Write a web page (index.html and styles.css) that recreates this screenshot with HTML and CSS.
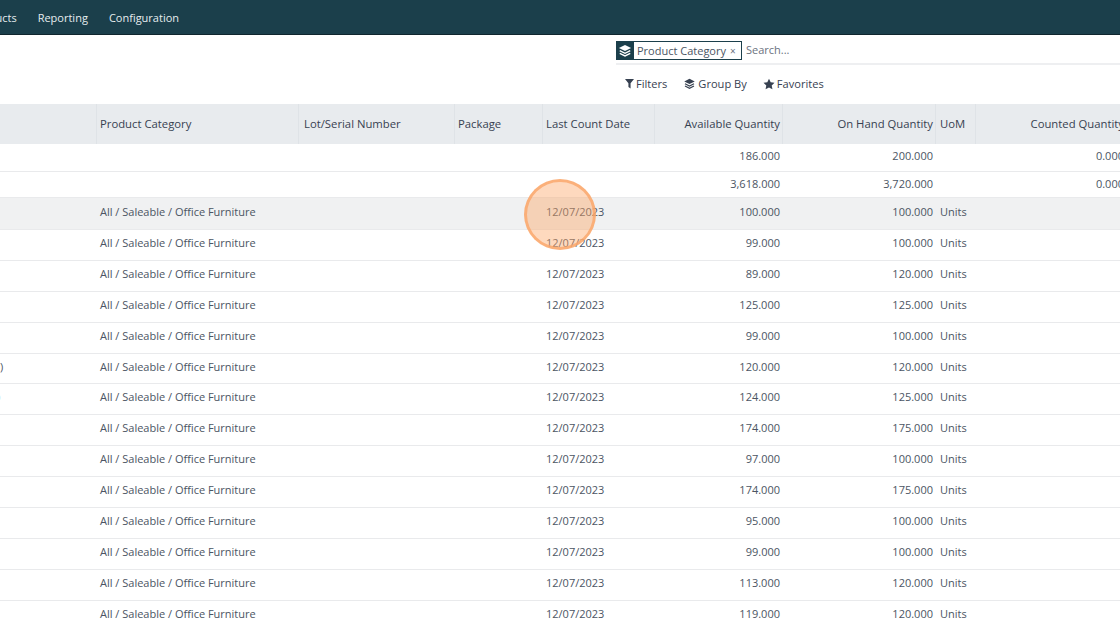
FILE: index.html
```html
<!DOCTYPE html>
<html lang="en">
<head>
<meta charset="utf-8">
<title>Inventory Report</title>
<link rel="stylesheet" href="styles.css">
</head>
<body>
<nav class="navbar">
  <a class="nav-item nav-first">Products</a>
  <a class="nav-item">Reporting</a>
  <a class="nav-item">Configuration</a>
</nav>
<section class="panel">
  <div class="search">
    <div class="facet">
      <span class="facet-icon"><svg viewBox="0 0 16 16" width="14" height="14"><path fill="#fff" d="M8 1 15 4.5 8 8 1 4.5Z"/><path fill="none" stroke="#fff" stroke-width="1.6" d="M2 7.6 8 10.6 14 7.6M2 10.6 8 13.6 14 10.6"/></svg></span>
      <span class="facet-label">Product Category</span>
      <span class="facet-x">×</span>
    </div>
    <span class="placeholder">Search...</span>
  </div>
  <div class="filters">
    <span class="filter"><svg class="ico-filter" viewBox="0 0 10 12" width="9" height="11"><path fill="#374151" d="M0 1H10L6.2 5.6V11.5L3.8 9.800V5.6Z"/></svg>Filters</span>
    <span class="filter"><svg viewBox="0 0 16 16" width="13" height="12"><path fill="#374151" d="M8 1 15 4.5 8 8 1 4.5Z"/><path fill="none" stroke="#374151" stroke-width="1.7" d="M2 7.6 8 10.6 14 7.6M2 10.6 8 13.6 14 10.6"/></svg>Group By</span>
    <span class="filter"><svg viewBox="0 0 24 24" width="12" height="12"><path fill="#374151" d="M12 1.5 15.4 8.6 23 9.6 17.4 15 18.9 22.7 12 18.9 5.100 22.700 6.600 15 1 9.600 8.600 8.600Z"/></svg>Favorites</span>
  </div>
</section>
<main class="list">
  <div class="row head">
    <div class="c"></div><div class="c">Product Category</div><div class="c lot">Lot/Serial Number</div><div class="c">Package</div><div class="c">Last Count Date</div><div class="c r">Available Quantity</div><div class="c r">On Hand Quantity</div><div class="c uom">UoM</div><div class="c r counted">Counted Quantity</div>
  </div>
  <div class="row group g1"><div></div><div></div><div></div><div></div><div></div><div class="r">186.000</div><div class="r">200.000</div><div></div><div class="r counted">0.000</div></div>
  <div class="row group g2"><div></div><div></div><div></div><div></div><div></div><div class="r">3,618.000</div><div class="r">3,720.000</div><div></div><div class="r counted">0.000</div></div>
  <div class="row item hover"><div></div><div>All / Saleable / Office Furniture</div><div></div><div></div><div>12/07/2023</div><div class="r">100.000</div><div class="r">100.000</div><div class="uom">Units</div><div></div></div>
  <div class="row item"><div></div><div>All / Saleable / Office Furniture</div><div></div><div></div><div>12/07/2023</div><div class="r">99.000</div><div class="r">100.000</div><div class="uom">Units</div><div></div></div>
  <div class="row item"><div></div><div>All / Saleable / Office Furniture</div><div></div><div></div><div>12/07/2023</div><div class="r">89.000</div><div class="r">120.000</div><div class="uom">Units</div><div></div></div>
  <div class="row item"><div></div><div>All / Saleable / Office Furniture</div><div></div><div></div><div>12/07/2023</div><div class="r">125.000</div><div class="r">125.000</div><div class="uom">Units</div><div></div></div>
  <div class="row item"><div></div><div>All / Saleable / Office Furniture</div><div></div><div></div><div>12/07/2023</div><div class="r">99.000</div><div class="r">100.000</div><div class="uom">Units</div><div></div></div>
  <div class="row item"><div class="cut">)</div><div>All / Saleable / Office Furniture</div><div></div><div></div><div>12/07/2023</div><div class="r">120.000</div><div class="r">120.000</div><div class="uom">Units</div><div></div></div>
  <div class="row item"><div class="cut far">)</div><div>All / Saleable / Office Furniture</div><div></div><div></div><div>12/07/2023</div><div class="r">124.000</div><div class="r">125.000</div><div class="uom">Units</div><div></div></div>
  <div class="row item"><div></div><div>All / Saleable / Office Furniture</div><div></div><div></div><div>12/07/2023</div><div class="r">174.000</div><div class="r">175.000</div><div class="uom">Units</div><div></div></div>
  <div class="row item"><div></div><div>All / Saleable / Office Furniture</div><div></div><div></div><div>12/07/2023</div><div class="r">97.000</div><div class="r">100.000</div><div class="uom">Units</div><div></div></div>
  <div class="row item"><div></div><div>All / Saleable / Office Furniture</div><div></div><div></div><div>12/07/2023</div><div class="r">174.000</div><div class="r">175.000</div><div class="uom">Units</div><div></div></div>
  <div class="row item"><div></div><div>All / Saleable / Office Furniture</div><div></div><div></div><div>12/07/2023</div><div class="r">95.000</div><div class="r">100.000</div><div class="uom">Units</div><div></div></div>
  <div class="row item"><div></div><div>All / Saleable / Office Furniture</div><div></div><div></div><div>12/07/2023</div><div class="r">99.000</div><div class="r">100.000</div><div class="uom">Units</div><div></div></div>
  <div class="row item"><div></div><div>All / Saleable / Office Furniture</div><div></div><div></div><div>12/07/2023</div><div class="r">113.000</div><div class="r">120.000</div><div class="uom">Units</div><div></div></div>
  <div class="row item"><div></div><div>All / Saleable / Office Furniture</div><div></div><div></div><div>12/07/2023</div><div class="r">119.000</div><div class="r">120.000</div><div class="uom">Units</div><div></div></div>
</main>
<div class="click-marker"></div>
</body>
</html>
```
FILE: styles.css
```css
* { box-sizing: border-box; }
html, body { margin: 0; height: 100%; overflow: hidden; background: #fff; }
body { font-family: "Open Sans", "Noto Sans", sans-serif; font-size: 11px; color: #4b5563; position: relative; }

.navbar { height: 35px; background: #1b3f4b; border-bottom: 1px solid #10262e; display: flex; align-items: center; gap: 21px; color: #e6edef; font-size: 11px; overflow: hidden; }
.nav-first { margin-left: -29px; }

.panel { height: 69px; display: flex; flex-direction: column; align-items: flex-start; padding-left: 616px; }
.search { width: 504px; height: 30px; padding-top: 6px; border-bottom: 2px solid #eeeff1; display: flex; align-items: flex-start; gap: 4px; }
.facet { height: 19px; width: 126px; border: 1px solid #1b3f4b; display: flex; align-items: center; color: #4b5563; }
.facet-icon { width: 18px; height: 19px; margin-left: -1px; background: #1b3f4b; display: flex; align-items: center; justify-content: center; flex: none; }
.facet-label { margin-left: 3px; padding-bottom: 1px; white-space: nowrap; }
.facet-x { margin-left: 4px; font-size: 10px; color: #6b7280; }
.placeholder { color: #6b7280; line-height: 17px; }
.filters { display: flex; gap: 16px; padding: 10px 0 0 9px; color: #374151; font-size: 11.1px; }
.filter { display: flex; align-items: center; gap: 2px; line-height: 17px; white-space: nowrap; }

.list { overflow: hidden; }
.row { display: grid; grid-template-columns: 97px 202px 156px 88px 112px 128px 153px 40px 151px; white-space: nowrap; width: 1127px; }
.row > div { padding: 0 3px; overflow: hidden; }
.row > .uom { padding-left: 4px; }
.r { text-align: right; }
.counted { overflow: visible; }
.head { height: 40px; background: #e8ebee; color: #374151; font-size: 11.3px; }
.head .c { line-height: 40px; border-right: 1px solid #dfe3e7; }
.head .c:last-child { border-right: 0; padding-right: 3px; }
.head .r { padding-right: 2px; }
.row > .lot { padding-left: 5px; }
.group { border-bottom: 1px solid #e9eaec; }
.g1 { height: 28px; line-height: 23px; }
.g2 { height: 26px; line-height: 23px; }
.item { height: 30.9px; line-height: 25px; border-bottom: 1px solid #e9eaec; }
.hover { background: #f0f1f2; height: 32px; line-height: 27px; }
.row > .cut { padding: 0; }
.row > .far { margin-left: -3px; }

.click-marker { position: absolute; left: 524px; top: 179px; width: 72px; height: 71px; border-radius: 50%; background: rgba(253, 164, 100, 0.42); border: 3px solid rgba(250, 165, 105, 0.8); }
```
